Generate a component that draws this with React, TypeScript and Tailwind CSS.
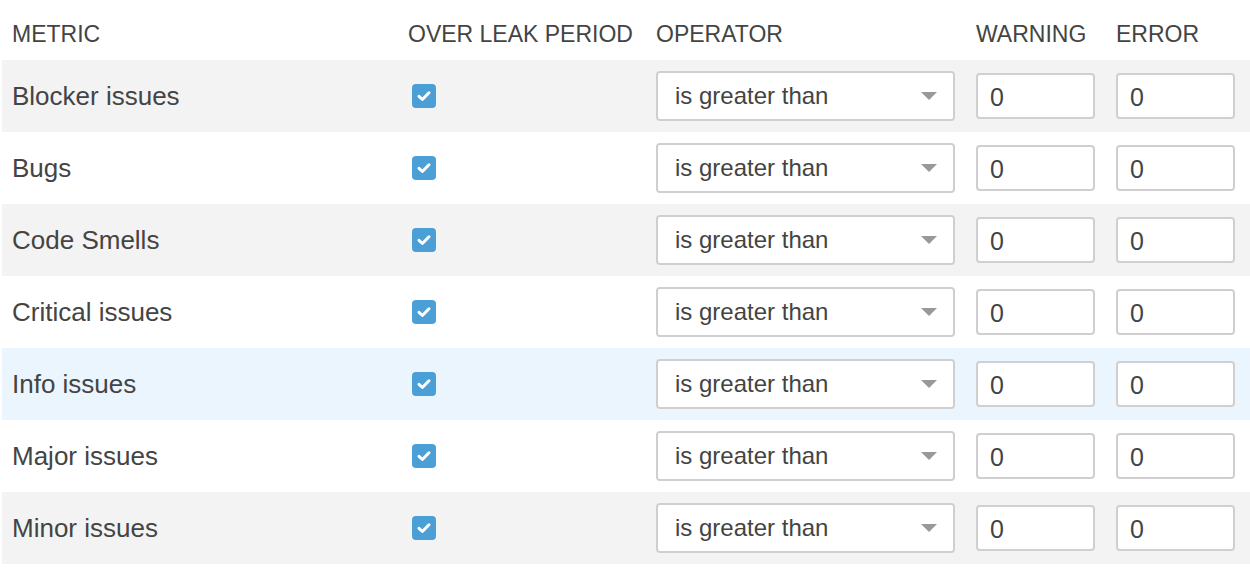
import React from 'react'

const metrics = [
    'Blocker issues',
    'Bugs',
    'Code Smells',
    'Critical issues',
    'Info issues',
    'Major issues',
    'Minor issues',
]

const Check = () => (
    <span className="flex h-[24px] w-[24px] items-center justify-center rounded-[4px] bg-[#4b9fd7]">
        <svg width="16" height="16" viewBox="0 0 16 16">
            <path
                d="M3 8.3 L6.4 11.5 L13 4.8"
                fill="none"
                stroke="#fff"
                strokeWidth="3"
                strokeLinecap="round"
                strokeLinejoin="round"
            />
        </svg>
    </span>
)

const Row: React.FC<{ name: string; index: number }> = ({ name, index }) => {
    // stripes on even rows, the info row is hovered
    const bg =
        name === 'Info issues'
            ? 'bg-[#eaf5fe]'
            : index % 2 === 0
            ? 'bg-[#f3f3f3]'
            : 'bg-white'

    return (
        <div className={`flex h-[72px] items-center ${bg}`}>
            <div className="w-[406px] pl-[10px] text-[26px]">{name}</div>
            <div className="w-[248px] pl-[4px]">
                <Check />
            </div>
            <div className="w-[320px]">
                <div className="flex h-[50px] w-[299px] items-center justify-between rounded-[4px] border-2 border-[#cfcfcf] bg-white pl-[17px] pr-[16px] text-[24px]">
                    <span>is greater than</span>
                    <span className="h-0 w-0 border-x-[8px] border-t-[8px] border-x-transparent border-t-[#999]" />
                </div>
            </div>
            <div className="w-[140px]">
                <div className="flex h-[46px] w-[119px] items-center rounded-[4px] border-2 border-[#cfcfcf] bg-white pl-[12px] pt-[3px] text-[25px]">
                    0
                </div>
            </div>
            <div className="w-[134px]">
                <div className="flex h-[46px] w-[119px] items-center rounded-[4px] border-2 border-[#cfcfcf] bg-white pl-[12px] pt-[3px] text-[25px]">
                    0
                </div>
            </div>
        </div>
    )
}

export default function App() {
    return (
        <div className="h-[568px] w-[1250px] overflow-hidden bg-white pl-[2px] font-['Liberation_Sans',Arial,sans-serif] text-[#444]">
            <div className="flex h-[60px] items-center pt-[8px] text-[23px]">
                <div className="w-[406px] pl-[10px]">METRIC</div>
                <div className="w-[248px]">OVER LEAK PERIOD</div>
                <div className="w-[320px]">OPERATOR</div>
                <div className="w-[140px]">WARNING</div>
                <div className="w-[134px]">ERROR</div>
            </div>
            {metrics.map((m, i) => (
                <Row key={m} name={m} index={i} />
            ))}
        </div>
    )
}
